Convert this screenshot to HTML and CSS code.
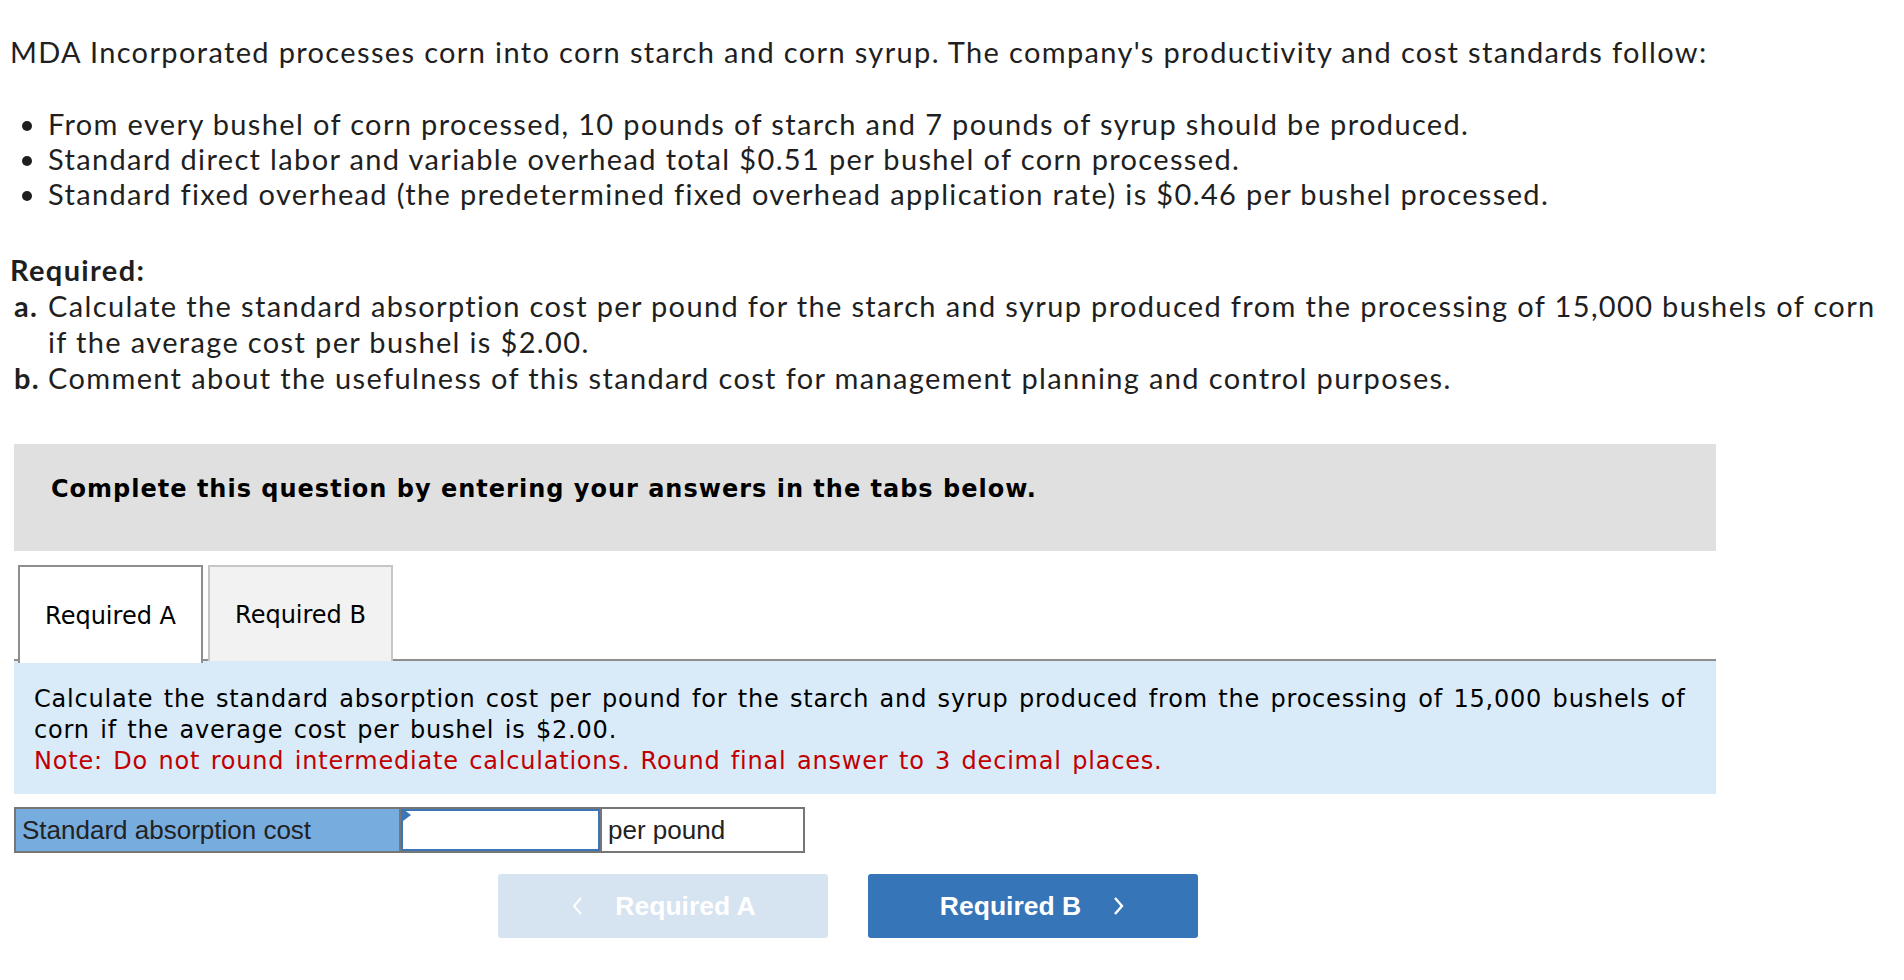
FILE: index.html
```html
<!DOCTYPE html>
<html lang="en">
<head>
<meta charset="utf-8">
<title>MDA Incorporated</title>
<link rel="stylesheet" href="styles.css">
</head>
<body>
<div class="page">
  <p class="intro">MDA Incorporated processes corn into corn starch and corn syrup. The company's productivity and cost standards follow:</p>
  <ul class="bullets">
    <li>From every bushel of corn processed, 10 pounds of starch and 7 pounds of syrup should be produced.</li>
    <li>Standard direct labor and variable overhead total $0.51 per bushel of corn processed.</li>
    <li>Standard fixed overhead (the predetermined fixed overhead application rate) is $0.46 per bushel processed.</li>
  </ul>
  <p class="req-title">Required:</p>
  <ol class="req-list">
    <li><span class="req-letter">a.</span><span>Calculate the standard absorption cost per pound for the starch and syrup produced from the processing of 15,000 bushels of corn<br>if the average cost per bushel is $2.00.</span></li>
    <li><span class="req-letter">b.</span><span>Comment about the usefulness of this standard cost for management planning and control purposes.</span></li>
  </ol>

  <div class="work">
    <div class="instructions">Complete this question by entering your answers in the tabs below.</div>
    <div class="tabs">
      <div class="tab active">Required A</div>
      <div class="tab">Required B</div>
    </div>
    <div class="panel">
      <p>Calculate the standard absorption cost per pound for the starch and syrup produced from the processing of 15,000 bushels of<br>corn if the average cost per bushel is $2.00.</p>
      <p class="note">Note: Do not round intermediate calculations. Round final answer to 3 decimal places.</p>
    </div>
    <div class="answer">
      <div class="cell label">Standard absorption cost</div>
      <div class="cell input"><span class="flag"></span></div>
      <div class="cell unit">per pound</div>
    </div>
    <div class="nav">
      <div class="btn prev">
        <svg class="chev" width="14" height="22" viewBox="0 0 14 22"><polyline points="11,3 4,11 11,19" fill="none" stroke="#ffffff" stroke-width="2"/></svg>
        <span>Required A</span>
      </div>
      <div class="btn next">
        <span>Required B</span>
        <svg class="chev" width="14" height="22" viewBox="0 0 14 22"><polyline points="3,3 10,11 3,19" fill="none" stroke="#ffffff" stroke-width="2.4"/></svg>
      </div>
    </div>
  </div>
</div>
</body>
</html>
```

FILE: styles.css
```css
html, body {
  margin: 0;
  padding: 0;
  background: #ffffff;
}

.page {
  padding: 34px 0 0 10px;
  font-family: Lato, "Open Sans", sans-serif;
  font-size: 29px;
  letter-spacing: 1.35px;
  line-height: 35px;
  color: #1f1f1f;
}

.intro {
  margin: 0;
  white-space: nowrap;
}

.bullets {
  margin: 37px 0 0 0;
  padding: 0 0 0 38px;
}

.bullets li {
  margin: 0;
  white-space: nowrap;
}

.req-title {
  margin: 41px 0 0 0;
  font-weight: 700;
}

.req-list {
  list-style: none;
  margin: 1px 0 0 0;
  padding: 0 0 0 4px;
}

.req-list li {
  display: flex;
  line-height: 36px;
  white-space: nowrap;
}

.req-letter {
  font-weight: 700;
  width: 34px;
  flex: none;
}

.work {
  margin: 48px 0 0 4px;
  width: 1702px;
  letter-spacing: normal;
}

.instructions {
  background: #e0e0e0;
  padding: 30px 36px 47px 37px;
  font-family: "DejaVu Sans", Verdana, sans-serif;
  font-weight: 700;
  font-size: 24px;
  letter-spacing: 1px;
  line-height: 30px;
  color: #000000;
}

.tabs {
  display: flex;
  gap: 5px;
  margin-top: 14px;
  padding-left: 4px;
  border-bottom: 2px solid #8e8e8e;
  height: 94px;
}

.tab {
  width: 181px;
  height: 92px;
  display: flex;
  align-items: center;
  justify-content: center;
  font-family: "DejaVu Sans", Verdana, sans-serif;
  font-size: 24px;
  color: #000000;
  background: #f2f2f2;
  border: 2px solid #c6c6c6;
  border-bottom: none;
  padding-top: 2px;
}

.tab.active {
  background: #ffffff;
  border-color: #8e8e8e;
  height: 94px;
  margin-bottom: -2px;
}

.panel {
  background: #d9ebf9;
  padding: 23px 20px 17px 20px;
  font-family: "DejaVu Sans", Verdana, sans-serif;
  font-size: 24px;
  letter-spacing: 0.8px;
  word-spacing: 2px;
  line-height: 31px;
  color: #000000;
}

.panel p {
  margin: 0;
  white-space: nowrap;
}

.panel .note {
  color: #c00000;
}

.answer {
  display: flex;
  margin-top: 13px;
  width: 791px;
  height: 46px;
  border: 2px solid #767676;
  box-sizing: border-box;
  font-family: "Liberation Sans", Arial, sans-serif;
  font-size: 26px;
  color: #222222;
}

.cell {
  display: flex;
  align-items: center;
  box-sizing: border-box;
}

.cell.label {
  width: 385px;
  background: #77acdf;
  padding-left: 6px;
  border-right: 2px solid #767676;
}

.cell.input {
  width: 199px;
  background: #ffffff;
  border: 2px solid #3a76b8;
  position: relative;
}

.flag {
  position: absolute;
  left: 0;
  top: 0;
  width: 0;
  height: 0;
  border-top: 6px solid transparent;
  border-bottom: 6px solid transparent;
  border-left: 8px solid #3a76b8;
  margin-top: -2px;
}

.cell.unit {
  flex: 1;
  background: #ffffff;
  padding-left: 6px;
  border-left: 2px solid #767676;
}

.nav {
  display: flex;
  gap: 40px;
  margin-top: 21px;
  padding-left: 484px;
}

.btn {
  width: 330px;
  height: 64px;
  border-radius: 3px;
  display: flex;
  align-items: center;
  justify-content: center;
  gap: 31px;
  font-family: "Liberation Sans", Arial, sans-serif;
  font-weight: 700;
  font-size: 26.5px;
  color: #ffffff;
}

.btn.prev {
  background: #d6e3f0;
}

.btn.next {
  background: #3575b8;
}

.chev {
  display: block;
}
```
